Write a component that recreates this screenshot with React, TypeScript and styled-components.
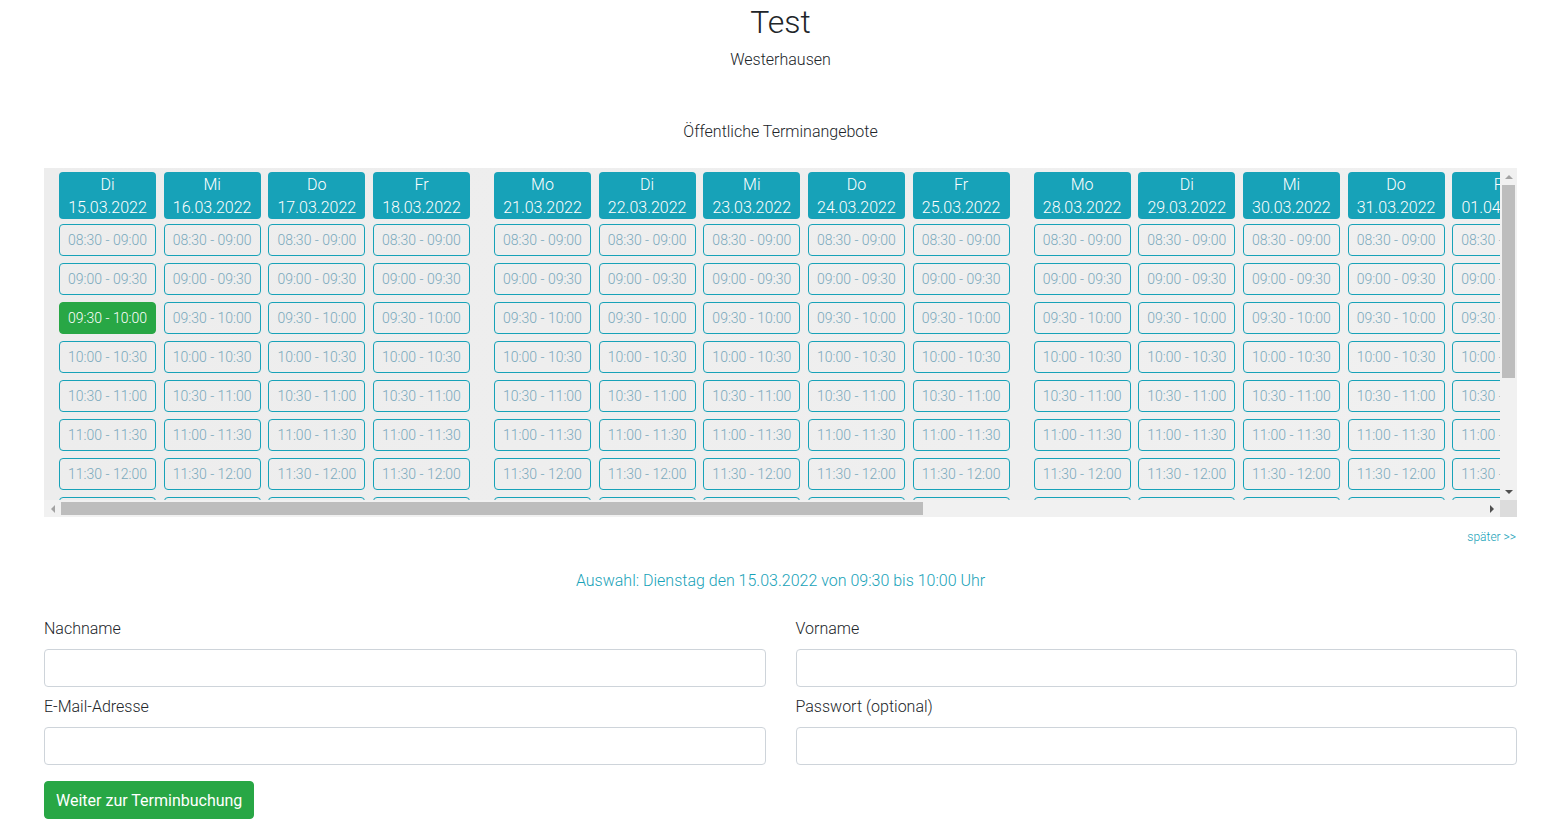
import styled, { createGlobalStyle } from "styled-components";

const GlobalStyle = createGlobalStyle`
  html, body {
    margin: 0;
    padding: 0;
    background: #fff;
  }
  body {
    font-family: Roboto, "Liberation Sans", sans-serif;
    font-weight: 300;
    color: #212529;
  }
  * {
    box-sizing: border-box;
  }
`;

type Day = { name: string; date: string };

const weeks: Day[][] = [
  [
    { name: "Di", date: "15.03.2022" },
    { name: "Mi", date: "16.03.2022" },
    { name: "Do", date: "17.03.2022" },
    { name: "Fr", date: "18.03.2022" },
  ],
  [
    { name: "Mo", date: "21.03.2022" },
    { name: "Di", date: "22.03.2022" },
    { name: "Mi", date: "23.03.2022" },
    { name: "Do", date: "24.03.2022" },
    { name: "Fr", date: "25.03.2022" },
  ],
  [
    { name: "Mo", date: "28.03.2022" },
    { name: "Di", date: "29.03.2022" },
    { name: "Mi", date: "30.03.2022" },
    { name: "Do", date: "31.03.2022" },
    { name: "Fr", date: "01.04.2022" },
  ],
  [
    { name: "Mo", date: "04.04.2022" },
    { name: "Di", date: "05.04.2022" },
    { name: "Mi", date: "06.04.2022" },
    { name: "Do", date: "07.04.2022" },
    { name: "Fr", date: "08.04.2022" },
  ],
  [
    { name: "Mo", date: "11.04.2022" },
    { name: "Di", date: "12.04.2022" },
    { name: "Mi", date: "13.04.2022" },
    { name: "Do", date: "14.04.2022" },
  ],
];

const slots = [
  "08:30 - 09:00",
  "09:00 - 09:30",
  "09:30 - 10:00",
  "10:00 - 10:30",
  "10:30 - 11:00",
  "11:00 - 11:30",
  "11:30 - 12:00",
  "12:00 - 12:30",
  "12:30 - 13:00",
  "13:00 - 13:30",
  "13:30 - 14:00",
  "14:00 - 14:30",
];

const App = () => {
  return (
    <>
      <GlobalStyle />
      <Page>
        <Title>Test</Title>
        <Location>Westerhausen</Location>
        <SectionTitle>Öffentliche Terminangebote</SectionTitle>

        <ScrollFrame>
          <Viewport>
            <CalendarInner>
              {weeks.map((week, wi) => (
                <Week key={wi}>
                  {week.map((day) => (
                    <DayColumn key={day.date}>
                      <DayHeader>
                        <span>{day.name}</span>
                        <span>{day.date}</span>
                      </DayHeader>
                      {slots.map((slot) => (
                        <Slot
                          key={slot}
                          $selected={day.date === "15.03.2022" && slot === "09:30 - 10:00"}
                        >
                          {slot}
                        </Slot>
                      ))}
                    </DayColumn>
                  ))}
                </Week>
              ))}
            </CalendarInner>
          </Viewport>

          <VBar>
            <BarButton>
              <Arrow $dir="up" $disabled />
            </BarButton>
            <VTrack>
              <VThumb style={{ height: "64.8%" }} />
            </VTrack>
            <BarButton>
              <Arrow $dir="down" />
            </BarButton>
          </VBar>

          <HBar>
            <BarButton>
              <Arrow $dir="left" $disabled />
            </BarButton>
            <HTrack>
              <HThumb style={{ width: "60.6%" }} />
            </HTrack>
            <BarButton>
              <Arrow $dir="right" />
            </BarButton>
          </HBar>

          <Corner />
        </ScrollFrame>

        <LaterRow>
          <LaterLink href="#">später &gt;&gt;</LaterLink>
        </LaterRow>

        <Selection>Auswahl: Dienstag den 15.03.2022 von 09:30 bis 10:00 Uhr</Selection>

        <Form onSubmit={(e) => e.preventDefault()}>
          <FormGrid>
            <Field>
              <Label>Nachname</Label>
              <Input type="text" />
            </Field>
            <Field>
              <Label>Vorname</Label>
              <Input type="text" />
            </Field>
            <Field>
              <Label>E-Mail-Adresse</Label>
              <Input type="email" />
            </Field>
            <Field>
              <Label>Passwort (optional)</Label>
              <Input type="password" />
            </Field>
          </FormGrid>
          <SubmitButton type="submit">Weiter zur Terminbuchung</SubmitButton>
        </Form>
      </Page>
    </>
  );
};

export default App;

const Page = styled.div`
  padding: 3px 48px 15px 44px;
`;

const Title = styled.h1`
  margin: 0;
  font-size: 32px;
  line-height: 38px;
  font-weight: 300;
  text-align: center;
  color: #212529;
`;

const Location = styled.div`
  margin-top: 7px;
  font-size: 16px;
  line-height: 24px;
  text-align: center;
`;

const SectionTitle = styled.div`
  margin-top: 48px;
  font-size: 16px;
  line-height: 24px;
  text-align: center;
`;

/* calendar box with its scrollbars */
const ScrollFrame = styled.div`
  display: grid;
  grid-template-columns: 1fr 17px;
  grid-template-rows: 332px 17px;
  margin-top: 24px;
  width: 100%;
  background: #efefef;
`;

const Viewport = styled.div`
  overflow: hidden;
  background: linear-gradient(90deg, #ededed 0%, #f0f0f0 100%);
`;

const CalendarInner = styled.div`
  display: flex;
  gap: 24px;
  width: max-content;
  padding: 4px 15px 6px 15px;
`;

const Week = styled.div`
  display: flex;
  gap: 7.67px;
`;

const DayColumn = styled.div`
  display: flex;
  flex-direction: column;
  width: 97px;
  gap: 7px;
`;

const DayHeader = styled.div`
  display: flex;
  flex-direction: column;
  align-items: center;
  justify-content: center;
  height: 47px;
  margin-bottom: -2px;
  border-radius: 4px;
  background: #17a2b8;
  color: #fff;
  font-size: 16px;
  line-height: 23px;
  font-weight: 300;
`;

const Slot = styled.div<{ $selected?: boolean }>`
  display: flex;
  align-items: center;
  justify-content: center;
  height: 32px;
  border: 1px solid ${(p) => (p.$selected ? "#28a745" : "#17a2b8")};
  border-radius: 4px;
  background: ${(p) => (p.$selected ? "#28a745" : "transparent")};
  color: ${(p) => (p.$selected ? "#fff" : "#7aa9bc")};
  font-size: 14px;
  font-weight: 300;
  white-space: nowrap;
`;

const VBar = styled.div`
  display: flex;
  flex-direction: column;
  background: #f1f1f1;
`;

const HBar = styled.div`
  display: flex;
  background: #f1f1f1;
`;

const Corner = styled.div`
  background: #dcdcdc;
`;

const BarButton = styled.div`
  flex: 0 0 17px;
  width: 17px;
  height: 17px;
  display: flex;
  align-items: center;
  justify-content: center;
`;

const VTrack = styled.div`
  flex: 1;
  padding: 0 2px;
`;

const VThumb = styled.div`
  width: 100%;
  background: #bdbdbd;
`;

const HTrack = styled.div`
  flex: 1;
  display: flex;
  padding: 2px 0;
`;

const HThumb = styled.div`
  height: 100%;
  background: #bdbdbd;
`;

type Dir = "up" | "down" | "left" | "right";

const Arrow = styled.span<{ $dir: Dir; $disabled?: boolean }>`
  width: 0;
  height: 0;
  ${(p) => {
    const c = p.$disabled ? "#a3a3a3" : "#505050";
    switch (p.$dir) {
      case "up":
        return `border-left: 4px solid transparent; border-right: 4px solid transparent; border-bottom: 4px solid ${c};`;
      case "down":
        return `border-left: 4px solid transparent; border-right: 4px solid transparent; border-top: 4px solid ${c};`;
      case "left":
        return `border-top: 4px solid transparent; border-bottom: 4px solid transparent; border-right: 4px solid ${c};`;
      default:
        return `border-top: 4px solid transparent; border-bottom: 4px solid transparent; border-left: 4px solid ${c};`;
    }
  }}
`;

const LaterRow = styled.div`
  display: flex;
  justify-content: flex-end;
  margin-top: 11px;
`;

const LaterLink = styled.a`
  margin-right: 1px;
  font-size: 12px;
  line-height: 18px;
  color: #17a2b8;
  text-decoration: none;
`;

const Selection = styled.div`
  margin-top: 23px;
  font-size: 16px;
  line-height: 24px;
  color: #17a2b8;
  text-align: center;
`;

const Form = styled.form`
  margin-top: 24px;
`;

const FormGrid = styled.div`
  display: grid;
  grid-template-columns: 1fr 1fr;
  column-gap: 30px;
  row-gap: 8px;
`;

const Field = styled.div`
  display: flex;
  flex-direction: column;
`;

const Label = styled.label`
  font-size: 16px;
  line-height: 24px;
  margin-bottom: 8px;
`;

const Input = styled.input`
  height: 38px;
  width: 100%;
  padding: 6px 12px;
  border: 1px solid #ced4da;
  border-radius: 4px;
  font-family: inherit;
  font-size: 16px;
  background: #fff;
  outline: none;
`;

const SubmitButton = styled.button`
  margin-top: 16px;
  height: 38px;
  padding: 0 11px;
  border: 1px solid #28a745;
  border-radius: 4px;
  background: #28a745;
  color: #fff;
  font-family: Roboto, "Liberation Sans", sans-serif;
  font-size: 16px;
  font-weight: 400;
  cursor: pointer;
`;
